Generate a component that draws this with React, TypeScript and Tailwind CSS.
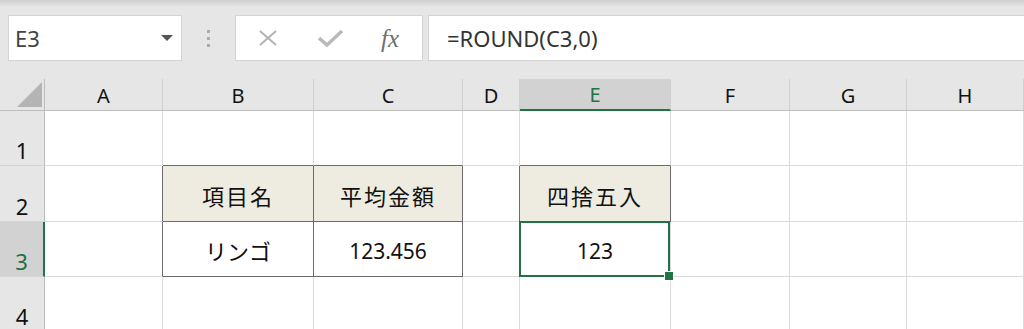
const COLS = ["A", "B", "C", "D", "E", "F", "G", "H"];
const ROWS = [1, 2, 3, 4];

const values: Record<string, string> = {
  "2-2": "項目名",
  "2-3": "平均金額",
  "2-5": "四捨五入",
  "3-2": "リンゴ",
  "3-3": "123.456",
  "3-5": "123"
};

function inTable(r: number, c: number) {
  if ((r === 2 || r === 3) && (c === 2 || c === 3)) return true;
  return r === 2 && c === 5;
}

function Toolbar() {
  return (
    <div className="flex h-[79px] items-start bg-[linear-gradient(180deg,_#cfcfcf_0px,_#e6e6e6_7px)] pt-[15px]">
      <div className="ml-[8px] flex h-[46px] w-[174px] items-center justify-between border border-[#d4d4d4] bg-white pl-[6px] pr-[8px]">
        <span className="text-[22px] leading-none text-[#444]">E3</span>
        <svg width="12" height="6" viewBox="0 0 12 6">
          <polygon points="0,0 12,0 6,6" fill="#555" />
        </svg>
      </div>

      <div className="flex h-[46px] w-[53px] flex-col items-center justify-center gap-[4px]">
        <span className="h-[3px] w-[3px] bg-[#ababab]" />
        <span className="h-[3px] w-[3px] bg-[#ababab]" />
        <span className="h-[3px] w-[3px] bg-[#ababab]" />
      </div>

      <div className="relative flex h-[46px] w-[188px] items-center border border-[#d4d4d4] bg-white">
        <svg className="ml-[22px]" width="20" height="18" viewBox="0 0 20 18">
          <path d="M2 2 L18 16 M18 2 L2 16" stroke="#b3b3b3" strokeWidth="2" />
        </svg>
        <svg className="ml-[40px]" width="26" height="18" viewBox="0 0 26 18">
          <path d="M1 9 L9 16 L24 2" stroke="#b9b9b9" strokeWidth="3.4" fill="none" />
        </svg>
        <span className="ml-[37px] font-['Liberation_Serif',serif] text-[25px] italic leading-none text-[#6f6f6f]">
          fx
        </span>
      </div>

      <div className="ml-[5px] flex h-[46px] flex-1 items-center border border-r-0 border-[#d4d4d4] bg-white pl-[18px]">
        <span className="text-[22px] leading-none text-[#333]">=ROUND(C3,0)</span>
      </div>
    </div>
  );
}

function ColumnHeaders() {
  return (
    <>
      <div className="relative border-r border-b border-r-[#bdbdbd] border-b-[#bdbdbd] bg-[#e6e6e6]">
        <svg className="absolute left-[17px] top-[3px]" width="26" height="26" viewBox="0 0 26 26">
          <polygon points="25,0 25,25 0,25" fill="#b4b4b4" />
        </svg>
      </div>
      {COLS.map((col) =>
        col === "E" ? (
          <div
            key={col}
            className="flex items-center justify-center border-r border-b-2 border-r-[#d0d0d0] border-b-[#217346] bg-[#d2d2d2] pt-[2px] text-[20px] leading-none text-[#217346]"
          >
            {col}
          </div>
        ) : (
          <div
            key={col}
            className="flex items-center justify-center border-r border-b border-r-[#d0d0d0] border-b-[#bdbdbd] bg-[#e6e6e6] pt-[2px] text-[20px] leading-none text-[#111]"
          >
            {col}
          </div>
        )
      )}
    </>
  );
}

function Cell({ r, c }: { r: number; c: number }) {
  const text = values[`${r}-${c}`];
  const right = inTable(r, c) || inTable(r, c + 1) ? "border-r-[#6b6b6b]" : "border-r-[#dadada]";
  const bottom = inTable(r, c) || inTable(r + 1, c) ? "border-b-[#6b6b6b]" : "border-b-[#dadada]";
  const fill = r === 2 && inTable(r, c) ? "bg-[#eeece1]" : "bg-white";
  const isCjk = text ? /[^\x00-\x7f]/.test(text) : false;
  const textStyle = isCjk
    ? r === 2
      ? "text-[22px] tracking-[2px]"
      : "text-[22px] tracking-[0px]"
    : "text-[21px]";
  const selected = r === 3 && c === 5;

  return (
    <div
      className={`relative flex items-end justify-center border-r border-b pb-[14px] leading-none text-[#111] ${right} ${bottom} ${fill} ${textStyle}`}
    >
      {text}
      {selected && (
        <div className="absolute -top-[1px] -left-[1px] right-0 -bottom-[1px] z-10 border-2 border-[#217346]">
          <div className="absolute -right-[6px] -bottom-[6px] h-[10px] w-[10px] border border-white bg-[#217346]" />
        </div>
      )}
    </div>
  );
}

export default function App() {
  return (
    <div className="h-[329px] w-[1024px] overflow-hidden bg-white font-['Noto_Sans','Noto_Sans_CJK_JP',sans-serif]">
      <Toolbar />
      <div className="grid grid-cols-[45px_118px_151px_149px_57px_151px_119px_117px_117px] grid-rows-[32px_55px_56px_55px_55px]">
        <ColumnHeaders />
        {ROWS.map((r) => (
          <div key={r} className="contents">
            {r === 3 ? (
              <div className="flex items-end justify-center border-r-2 border-b border-r-[#217346] border-b-[#d4d4d4] bg-[#d2d2d2] pb-[4px] text-[22px] leading-none text-[#217346]">
                {r}
              </div>
            ) : (
              <div className="flex items-end justify-center border-r border-b border-r-[#bdbdbd] border-b-[#d4d4d4] bg-[#e6e6e6] pb-[4px] text-[22px] leading-none text-[#111]">
                {r}
              </div>
            )}
            {COLS.map((_, i) => (
              <Cell key={i} r={r} c={i + 1} />
            ))}
          </div>
        ))}
      </div>
    </div>
  );
}
